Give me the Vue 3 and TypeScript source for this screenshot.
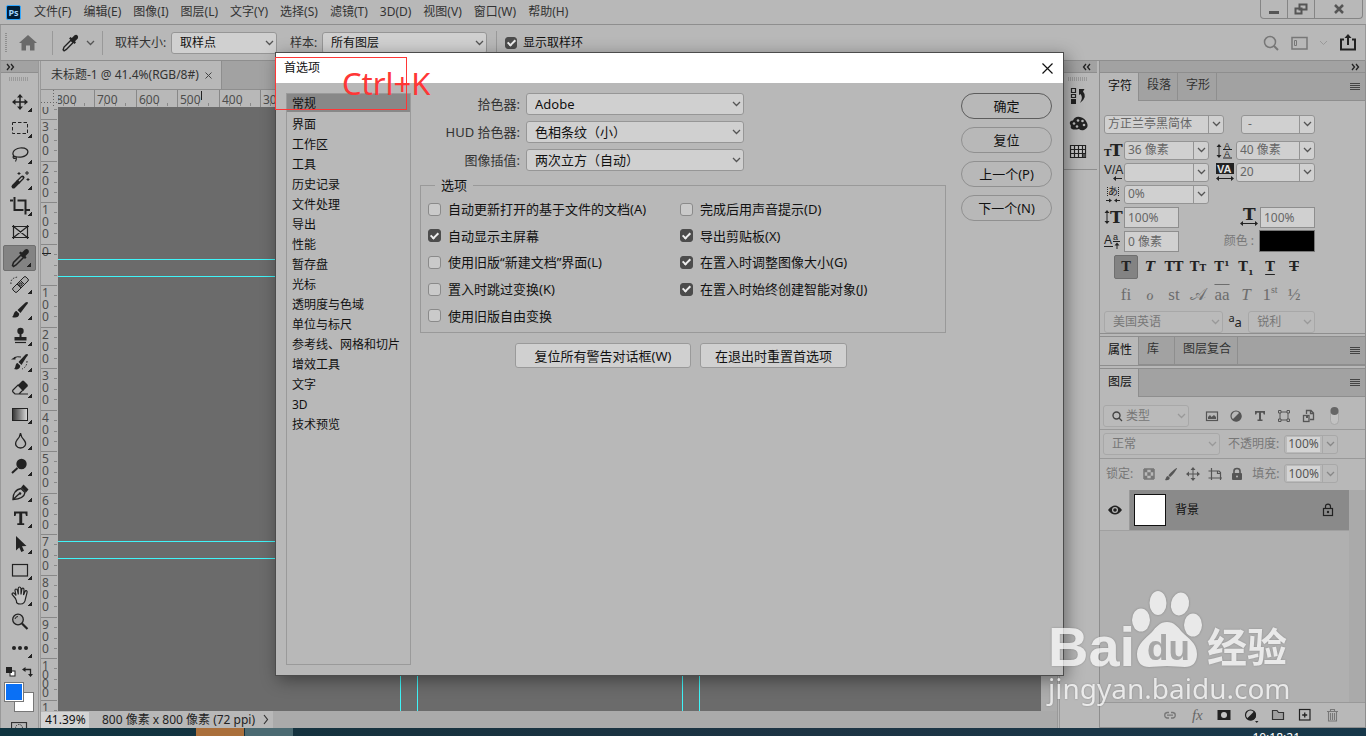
<script setup lang="ts">
import { ref } from 'vue'

interface Tick { pos: number; label: string }

const menus = ['文件(F)', '编辑(E)', '图像(I)', '图层(L)', '文字(Y)', '选择(S)', '滤镜(T)', '3D(D)', '视图(V)', '窗口(W)', '帮助(H)']

const dropper = '<path d="M5.5 20.5l-1-1 1-3 7.5-7.500 2.500 2.500-7.500 7.500z" fill="none" stroke="#222" stroke-width="1.500"/><path d="M11 7l1.500-1.500 1.500 1 3-3q2-1 3.200.3t.3 3.200l-3 3 1 1.500-1.500 1.500z" fill="#222"/>'

const tools: { id: string; title: string; sub: boolean; art: string }[] = [
  { id: 'move', title: '移动', sub: true, art: '<path d="M12 5v14M5 12h14" stroke="#222" stroke-width="1.500"/><path d="M12 4l3 3.500H9zM12 20l3-3.500H9zM4 12l3.500-3v6zM20 12l-3.500-3v6z" fill="#222"/>' },
  { id: 'marquee', title: '选框', sub: true, art: '<rect x="4.500" y="6.500" width="15" height="11" fill="none" stroke="#222" stroke-dasharray="3.500 2"/>' },
  { id: 'lasso', title: '套索', sub: true, art: '<path d="M7 15C3 12 5 7 12 6c6-.5 9 2 7.500 5.500C18 15 11 16 7.500 14.500c-2-1-3 .5-2 1.500s3 0 3-1.200M8 15c1 2 .5 3-.5 4.500" fill="none" stroke="#222" stroke-width="1.200"/>' },
  { id: 'wand', title: '魔棒', sub: true, art: '<path d="M5.500 18.500l5-5" stroke="#222" stroke-width="4" stroke-linecap="round"/><path d="M10 14l4.500-4.500" stroke="#222" stroke-width="4" stroke-linecap="round"/><path d="M11 13l3.500-3.500" stroke="#b8b8b8" stroke-width="1.500"/><path d="M11 4v3M9.500 5.500h3M19 3v4M17 5h4M20 10v3M18.500 11.500h3" stroke="#222"/>' },
  { id: 'crop', title: '裁剪', sub: true, art: '<path d="M6.500 3v13h9M9.500 6.500h8v14M2 6.500h3M18.500 16H22" fill="none" stroke="#222" stroke-width="2"/>' },
  { id: 'frame', title: '图框', sub: false, art: '<path d="M5.500 6.500h14v11h-14zM5.500 6.500l14 11M19.500 6.500l-14 11M4 6.500h2M19 6.500h2M4 17.500h2M19 17.500h2M5.500 5v2M19.500 5v2M5.500 17v2M19.500 17v2" fill="none" stroke="#222" stroke-width="1.200"/>' },
  { id: 'dropper', title: '吸管', sub: true, art: dropper },
  { id: 'heal', title: '修复画笔', sub: true, art: '<path d="M5 16l11-11q1-1 2 0l2 2q1 1 0 2L9 20q-1 1-2 0l-2-2q-1-1 0-2z" fill="#aaa" stroke="#222"/><path d="M9 12l4 4M12.500 8.500l4 4" stroke="#222"/><circle cx="12.500" cy="12.500" r="1.700" fill="#777" stroke="#222"/><path d="M3 12q-1-6 7-7" fill="none" stroke="#222" stroke-dasharray="1.500 1.500"/>' },
  { id: 'brush', title: '画笔', sub: true, art: '<path d="M19.500 4c1 1 0 2-1 3l-6 8-3-3 8-7.500q1-.8 2-.5zM8.500 13l2.800 2.800C11 20 7 20 4 19c2-1 1.500-5.500 4.500-6z" fill="#222"/>' },
  { id: 'stamp', title: '仿制图章', sub: true, art: '<circle cx="12.500" cy="7" r="3.200" fill="#222"/><path d="M11.500 9h2v4h5v3.500h-12V13h5z" fill="#222"/><path d="M7 18.500h11" stroke="#222" stroke-width="1.200"/>' },
  { id: 'history', title: '历史记录画笔', sub: true, art: '<path d="M19.500 4c1 1 0 2-1 3l-5 8-3-3 7-7.500q1-.8 2-.5zM9.500 13l2.800 2.800C12 19.500 8.500 20 6 19c2-1 1-5.500 3.500-6zM3 9.500l4.500-3v3z" fill="#222"/><path d="M6 8q3-2 7-1" fill="none" stroke="#222"/><path d="M19 11q0 6-5 8" fill="none" stroke="#222" stroke-dasharray="1.500 1.500"/>' },
  { id: 'eraser', title: '橡皮擦', sub: true, art: '<path d="M10 9l4-4q1-.8 2 0l3.500 3.500q.8 1 0 2L15 15z" fill="#222"/><path d="M10 9l5 5-4 4H7l-2-2q-1-1 0-2zM10 18h10" fill="none" stroke="#222" stroke-width="1.200"/>' },
  { id: 'gradient', title: '渐变', sub: true, art: '<defs><linearGradient id="gfill"><stop offset="0" stop-color="#333"/><stop offset="1" stop-color="#ddd"/></linearGradient></defs><rect x="4.500" y="6.500" width="15" height="12" fill="url(#gfill)" stroke="#222"/>' },
  { id: 'blur', title: '模糊', sub: true, art: '<path d="M12.500 5q.5 4 3.500 7c4 5-.5 8-3.500 8s-7-3-3.500-8q3-3 3.500-7z" fill="none" stroke="#222" stroke-width="1.300"/>' },
  { id: 'dodge', title: '减淡', sub: true, art: '<circle cx="13.500" cy="10" r="5.200" fill="#222"/><path d="M9.500 14L4 19" stroke="#222" stroke-width="2"/>' },
  { id: 'pen', title: '钢笔', sub: true, art: '<path d="M5 19.500Q5 10 13 8.500l4 4Q16 19 5 19.500zM5 19.500l6-5.500" fill="none" stroke="#222" stroke-width="1.400"/><circle cx="12" cy="13.500" r="1.300" fill="#222"/><path d="M13 7.500l2.500-3 5 5-2.500 3z" fill="#222"/>' },
  { id: 'type', title: '文字', sub: true, art: '<path d="M6 5.500h13.500V10H18l-.7-2.500h-3.100v9.800h2v1.700H9.300v-1.700h2V7.500H8.200L7.500 10H6z" fill="#222"/>' },
  { id: 'select', title: '路径选择', sub: true, art: '<path d="M8 4v14.500l3.300-3 2 4.500 2.700-1.200-2-4.500 4.500-.3z" fill="#222"/>' },
  { id: 'rect', title: '矩形', sub: true, art: '<rect x="4.500" y="6.500" width="15" height="11.500" fill="none" stroke="#222" stroke-width="1.200"/>' },
  { id: 'hand', title: '抓手', sub: true, art: '<path d="M7.500 14.500l-3-3.500q-1-1.500.3-2T8 11.500L7 6.500Q7 5 8 5t1.500 1.500l.8 4-.1-6Q10.500 3 11.500 3T13 4.500v6l.8-5Q14 4 15 4.200T16 6l-.5 5 1.500-3.500q.8-1.300 1.600-.8t.4 2l-1.500 5.800Q17 20 12.500 20T8.500 17z" fill="#c4c4c4" stroke="#222" stroke-width="1.200"/>' },
  { id: 'zoom', title: '缩放', sub: false, art: '<circle cx="10" cy="9.500" r="5.300" fill="#aaa" stroke="#222" stroke-width="1.300"/><path d="M14 13.500l5.500 5.500" stroke="#222" stroke-width="2.200"/><path d="M7 9q.5-2.500 3-2.500" fill="none" stroke="#222"/>' },
  { id: 'more', title: '更多', sub: true, art: '<circle cx="6" cy="12" r="2" fill="#222"/><circle cx="12" cy="12" r="2" fill="#222"/><circle cx="18" cy="12" r="2" fill="#222"/>' },
]

const majorStep = 41.45
const hTicks: Tick[] = Array.from({ length: 6 }, (_, i) => ({ pos: Math.round(-5 + i * majorStep), label: String(Math.abs(800 - i * 100)) }))
const vTicks: Tick[] = Array.from({ length: 16 }, (_, i) => ({ pos: Math.round(-29 + i * majorStep), label: String(Math.abs(400 - i * 100)) }))
const minor = [10, 21, 31]
const digitStep = (label: string): number => (label.length > 3 ? 9 : 12)

const sections = ['常规', '界面', '工作区', '工具', '历史记录', '文件处理', '导出', '性能', '暂存盘', '光标', '透明度与色域', '单位与标尺', '参考线、网格和切片', '增效工具', '文字', '3D', '技术预览']
const current = ref('常规')

const fields = [
  { id: 'picker', label: '拾色器:', value: 'Adobe' },
  { id: 'hud', label: 'HUD 拾色器:', value: '色相条纹（小）' },
  { id: 'interp', label: '图像插值:', value: '两次立方（自动）' },
]

const leftChecks = ref([
  { label: '自动更新打开的基于文件的文档(A)', on: false },
  { label: '自动显示主屏幕', on: true },
  { label: '使用旧版“新建文档”界面(L)', on: false },
  { label: '置入时跳过变换(K)', on: false },
  { label: '使用旧版自由变换', on: false },
])
const rightChecks = ref([
  { label: '完成后用声音提示(D)', on: false },
  { label: '导出剪贴板(X)', on: true },
  { label: '在置入时调整图像大小(G)', on: true },
  { label: '在置入时始终创建智能对象(J)', on: true },
])
const actions = ['确定', '复位', '上一个(P)', '下一个(N)']
const showRing = ref(true)

const dockIcons = [
  { id: '历史记录', art: '<path d="M2.500 2.500h4v4h-4zM2.500 8.500h4v3h-4z" fill="none" stroke="#222" stroke-width="1.200"/><rect x="2" y="13" width="5" height="5" fill="#222"/><path d="M10 3h5.500l-1.500 2.500q5 5.500-3 11.500 3.500-5.500.5-9L10 9z" fill="#222"/>' },
  { id: '颜色', art: '<path d="M1 10q-1-3 3-3.500Q6 2 11 3t7 6-3 7q-3 1-5-1-5 1-7 0-2-1-1-3z" fill="#222"/><g fill="#b8b8b8"><circle cx="5" cy="9.500" r="1.300"/><circle cx="9" cy="6.500" r="1.300"/><circle cx="13.500" cy="7" r="1.300"/><circle cx="15" cy="11" r="1.300"/><circle cx="8" cy="12.500" r="1.300"/></g>' },
  { id: '色板', art: '<path d="M1.500 3.500h15v12h-15zM1.500 7.500h15M1.500 11.500h15M5.500 3.500v12M9.500 3.500v12M13.500 3.500v12" fill="#c8c8c8" stroke="#222" stroke-width="1.200"/><path d="M14 12h2.500v3H14z" fill="#555"/>' },
]

const styles = [
  { t: 'T', cls: 'bold', name: '仿粗体' }, { t: 'T', cls: 'ital', name: '仿斜体' }, { t: 'TT', cls: '', name: '全部大写' },
  { t: 'T', small: 'T', cls: '', name: '小型大写' }, { t: 'T', sup: '1', cls: '', name: '上标' }, { t: 'T', sub: '1', cls: '', name: '下标' },
  { t: 'T', cls: 'under', name: '下划线' }, { t: 'T', cls: 'strike', name: '删除线' },
]
const ligs = [
  { t: 'fi', cls: '' }, { t: 'ℴ', cls: 'ital' }, { t: 'st', cls: '' }, { t: '𝒜', cls: '' },
  { t: 'aa', cls: 'over' }, { t: 'T', cls: 'ital' }, { t: '1', sup: 'st', cls: '' }, { t: '½', cls: '' },
]

const filterIcons = [
  '<rect x="2.500" y="4" width="11" height="8.500" fill="none" stroke="#555" stroke-width="1.200"/><path d="M4 11V9l2-2 1.500 2L10 7l2 2v2z" fill="#555"/>',
  '<circle cx="8" cy="8" r="5" fill="none" stroke="#555" stroke-width="1.200"/><path d="M11.500 4.500A5 5 0 1 1 4.500 11.500z" fill="#555"/>',
  '<path d="M3 3h10v3.500h-1.200L11 4.800H9v6.700h1.500V13h-5v-1.500H7V4.800H5L4.200 6.500H3z" fill="#555"/>',
  '<path d="M4 4h8v8H4z" fill="none" stroke="#555"/><path d="M2.500 2.500h2.500v2.500H2.500zM11 2.500h2.500v2.500H11zM2.500 11h2.500v2.500H2.500zM11 11h2.500v2.500H11z" fill="#b8b8b8" stroke="#555"/>',
  '<path d="M6.500 6V2.500H11l2.500 2.500v6.500H10M10.500 3v2.500H13" fill="none" stroke="#555" stroke-width="1.300"/><rect x="3.500" y="7.500" width="5.500" height="6" fill="none" stroke="#555" stroke-width="1.300"/><path d="M6 7h2v3H6z" fill="#555"/>',
]
const lockIcons = [
  '<path d="M3 3h10v10H3z" fill="none" stroke="#555"/><path d="M3 3h3.300v3.300H3zM9.700 3H13v3.300H9.700zM6.300 6.300h3.400v3.400H6.300zM3 9.700h3.300V13H3zM9.700 9.700H13V13H9.700z" fill="#777"/>',
  '<path d="M14 2c.5 1-6 9-7 9L5.500 9.500C6 8 13 1.500 14 2zM5 10l1.800 1.800C6.500 14.500 4 14.500 2 14c1-1 1-4 3-4z" fill="#555"/>',
  '<path d="M8 3v10M3 8h10" stroke="#555"/><path d="M8 1l2.500 3h-5zM8 15l2.500-3h-5zM1 8l3-2.500v5zM15 8l-3-2.500v5z" fill="#555"/>',
  '<path d="M4.500 2v12M1.500 5H12l1.500 1.500V14M1.500 12H15M10.500 5v2.500h3" fill="none" stroke="#555" stroke-width="1.200"/>',
  '<rect x="3" y="7" width="10" height="7" rx="1" fill="#555"/><path d="M5 7V5q0-2.500 3-2.500T11 5v2" fill="none" stroke="#555" stroke-width="1.600"/><circle cx="8" cy="10.500" r="1" fill="#b8b8b8"/>',
]
const footIcons = [
  { id: '链接', art: '<path d="M7 5.500H5a2.800 2.800 0 0 0 0 5.500h2M9 5.500h2a2.800 2.800 0 0 1 0 5.500H9M5 8.200h6" fill="none" stroke="#777" stroke-width="1.300"/>' },
  { id: '样式', art: '' },
  { id: '蒙版', art: '<rect x="1.500" y="3" width="13" height="10" fill="#222"/><circle cx="8" cy="8" r="3" fill="#c4c4c4"/>' },
  { id: '调整', art: '<circle cx="7.500" cy="8" r="5" fill="none" stroke="#222" stroke-width="1.200"/><path d="M11 4.500A5 5 0 1 1 4 11.500z" fill="#222"/><path d="M12 14h3.500l-1.700 2z" fill="#222"/>' },
  { id: '新建组', art: '<path d="M2.500 12.500v-9H7l1.500 2h5v7z" fill="#a0a0a0" stroke="#333" stroke-width="1.200"/>' },
  { id: '新建图层', art: '<rect x="2.500" y="2.500" width="10.500" height="10.500" fill="none" stroke="#222" stroke-width="1.200"/><path d="M7.750 5.500v5M5.200 8h5" stroke="#222" stroke-width="1.300"/>' },
  { id: '删除', art: '<path d="M3 4.500h11M6.500 4V2.500h4V4M4.500 5v9h8V5M6.500 6v7M8.500 6v7M10.500 6v7" fill="none" stroke="#777" stroke-width="1.100"/>' },
]
</script>

<template>
  <div class="screen">
    <header class="menubar">
      <span class="ps">Ps</span>
      <nav class="menus"><a v-for="m in menus" :key="m" href="#">{{ m }}</a></nav>
      <div class="winctl">
        <button aria-label="最小化"><svg width="12" height="12"><path d="M1 9.500h10" stroke="#555" stroke-width="3" /></svg></button>
        <button aria-label="还原"><svg width="14" height="12"><path d="M5.500 1.500h7v5h-7zM1.500 5.500h6v5h-6z" fill="none" stroke="#555" stroke-width="2" /></svg></button>
        <button class="wide" aria-label="关闭"><svg width="12" height="12"><path d="M2 2l8 8M10 2l-8 8" stroke="#555" stroke-width="2.500" /></svg></button>
      </div>
    </header>

    <div class="options">
      <i class="vgrip"></i>
      <button class="home" aria-label="主页"><svg width="18" height="16"><path d="M9 0l9 8h-2.500v7.500H11v-5H7v5H2.500V8H0z" fill="#6a6a6a" /></svg></button>
      <i class="sep"></i>
      <svg class="opt-drop" width="22" height="22" viewBox="0 0 24 24" v-html="dropper"></svg>
      <svg class="chev" width="9" height="6"><path d="M1 1l3.500 3.500L8 1" /></svg>
      <i class="sep sep2"></i>
      <label class="lab" for="size">取样大小:</label>
      <span class="sel size"><select id="size"><option>取样点</option></select><svg width="9" height="6"><path d="M1 1l3.500 3.500L8 1" /></svg></span>
      <label class="lab lab2" for="sample">样本:</label>
      <span class="sel sample"><select id="sample"><option>所有图层</option></select><svg width="9" height="6"><path d="M1 1l3.500 3.500L8 1" /></svg></span>
      <i class="sep sep3"></i>
      <label class="ring"><input v-model="showRing" type="checkbox" class="cb small">显示取样环</label>
      <div class="opt-right">
        <svg width="16" height="16"><circle cx="7" cy="7" r="5.500" fill="none" stroke="#777" stroke-width="1.500" /><path d="M11 11l4 4" stroke="#777" stroke-width="2" /></svg>
        <svg width="17" height="14"><path d="M1 1.500h15v11.500H1z" fill="none" stroke="#777" stroke-width="1.500" /><path d="M3.500 4.500h2v5h-2z" fill="none" stroke="#777" /></svg>
        <svg class="pale" width="9" height="6"><path d="M1 1l3.500 3.500L8 1" /></svg>
        <svg width="18" height="17"><path d="M5 5.500H2V15.500h14V5.500h-3M9 11V3" fill="none" stroke="#222" stroke-width="2" /><path d="M9 0l3.500 4h-7z" fill="#222" /></svg>
      </div>
    </div>

    <main class="work">
      <aside class="tools">
        <div class="strip">
          <svg width="9" height="8"><path d="M1 1l2.500 3L1 7M5 1l2.500 3L5 7" class="dbl" /></svg>
        </div>
        <i class="hgrip"></i>
        <div class="toollist">
          <button v-for="t in tools" :key="t.id" :class="['tool', { active: t.id === 'dropper', sub: t.sub }]" :aria-label="t.title">
            <svg width="24" height="24" viewBox="0 0 24 24" v-html="t.art"></svg>
          </button>
        </div>
        <div class="swaps">
          <svg width="12" height="12"><rect x="5" y="5" width="5" height="5" fill="#fff" stroke="#222" /><rect x="1" y="1" width="6" height="6" fill="#222" /></svg>
          <svg width="12" height="12"><path d="M3 3.500h5.500V9" fill="none" stroke="#222" stroke-width="1.300" /><path d="M0 3.500L3.500 1v5zM8.500 11L6 8h5z" fill="#222" /></svg>
        </div>
        <div class="colors"><i class="bgc"></i><i class="fgc"></i></div>
        <svg class="mask" width="18" height="13"><rect x=".5" y=".5" width="15" height="12" fill="none" stroke="#333" stroke-width="1.200" /><circle cx="8" cy="6" r="3.500" fill="none" stroke="#333" stroke-dasharray="1.500 1" /></svg>
      </aside>

      <section class="doc">
        <div class="doctabs"><div class="doctab"><span>未标题-1 @ 41.4%(RGB/8#)</span><button aria-label="关闭文档"><svg width="7" height="7"><path d="M.5.5l6 6M6.500.5l-6 6" stroke="#444" /></svg></button></div></div>
        <div class="docgrid">
          <svg class="corner" width="17" height="17"><path d="M0 12.500h17M12.500 0v17" stroke="#666" stroke-dasharray="1 2" /></svg>
          <svg class="hruler" width="100%" height="17">
            <g v-for="t in hTicks" :key="t.pos">
              <line :x1="t.pos + 0.5" :x2="t.pos + 0.5" y1="0" y2="17" />
              <line v-for="m in minor" :key="m" :x1="t.pos + m + 0.5" :x2="t.pos + m + 0.5" y1="13" y2="16" />
              <text :x="t.pos + 3" y="14">{{ t.label }}</text>
            </g>
            <line class="cursor" x1="143.500" x2="143.500" y1="1" y2="10" />
          </svg>
          <svg class="vruler" width="17" height="100%">
            <g v-for="t in vTicks" :key="t.pos">
              <line x1="0" x2="16" :y1="t.pos + 0.5" :y2="t.pos + 0.5" />
              <line v-for="m in minor" :key="m" x1="13" x2="16" :y1="t.pos + m + 0.5" :y2="t.pos + m + 0.5" />
              <text v-for="(d, i) in t.label.split('')" :key="i" x="1" :y="t.pos + 12 + i * digitStep(t.label)">{{ d }}</text>
            </g>
            <line class="cursor" x1="1" x2="10" y1="146.500" y2="146.500" />
          </svg>
          <svg class="canvas" width="100%" height="100%">
            <line v-for="y in [152, 169, 434, 451]" :key="y" x1="0" x2="100%" :y1="y + 0.5" :y2="y + 0.5" />
            <line v-for="x in [342, 359, 624, 641]" :key="x" y1="0" y2="100%" :x1="x + 0.5" :x2="x + 0.5" />
          </svg>
          <div class="vscroll"></div>
        </div>
        <footer class="status">
          <input class="zoomv" aria-label="缩放比例" value="41.39%">
          <span class="docinfo">800 像素 x 800 像素 (72 ppi)</span>
          <svg width="6" height="11"><path d="M1 1l3.500 4.500L1 10" fill="none" stroke="#333" stroke-width="1.200" /></svg>
        </footer>
      </section>

      <aside class="dock">
        <div class="strip end"><svg width="9" height="8"><path d="M4 1L1.500 4 4 7M8 1L5.500 4 8 7" class="dbl" /></svg></div>
        <div class="dockbody">
          <i class="hgrip"></i>
          <button v-for="d in dockIcons" :key="d.id" :aria-label="d.id"><svg width="19" height="19" v-html="d.art"></svg></button>
        </div>
      </aside>

      <aside class="panels">
        <div class="strip end"><svg width="9" height="8"><path d="M1 1l2.500 3L1 7M5 1l2.500 3L5 7" class="dbl" /></svg></div>
        <section class="group">
          <div class="tabs"><button class="on">字符</button><button>段落</button><button>字形</button><i class="burger"></i></div>
          <div class="char">
            <div class="crow">
              <span class="combo font"><input aria-label="字体" value="方正兰亭黑简体"><button aria-label="展开"><svg width="9" height="6"><path d="M1 1l3.500 3.500L8 1" /></svg></button></span>
              <span class="combo face"><input aria-label="字体样式" value="-"><button aria-label="展开"><svg width="9" height="6"><path d="M1 1l3.500 3.500L8 1" /></svg></button></span>
            </div>
            <div class="crow">
              <svg class="ci" width="18" height="18"><text x="0" y="15" font-size="10">T</text><text x="6" y="15" font-size="17">T</text></svg>
              <span class="combo num"><input aria-label="字号" value="36 像素"><button aria-label="展开"><svg width="9" height="6"><path d="M1 1l3.500 3.500L8 1" /></svg></button></span>
              <svg class="ci" width="18" height="18"><path d="M3 5v9M7 8.500h9M7 17h9" class="ln" /><path d="M3 3l2.500 3h-5zM3 17l2.500-3h-5z" /><text class="sans" x="8" y="8" font-size="9">A</text><text class="sans" x="8" y="16" font-size="9">A</text></svg>
              <span class="combo lead"><input aria-label="行距" value="40 像素"><button aria-label="展开"><svg width="9" height="6"><path d="M1 1l3.500 3.500L8 1" /></svg></button></span>
            </div>
            <div class="crow">
              <svg class="ci" width="18" height="18"><text class="sans" x="0" y="11" font-size="12">V/A</text><path d="M10 15.500h8" class="ln" /><path d="M9 15.500l3-2.500v5z" /></svg>
              <span class="combo num"><input aria-label="字距微调" value=""><button aria-label="展开"><svg width="9" height="6"><path d="M1 1l3.500 3.500L8 1" /></svg></button></span>
              <svg class="ci" width="18" height="18"><rect width="18" height="11" /><text class="sans inv" x="1" y="10" font-size="11">VA</text><path d="M2 15.500h14" class="ln" /><path d="M0 15.500l3-2.500v5zM18 15.500l-3-2.500v5z" /></svg>
              <span class="combo lead"><input aria-label="字距" value="20"><button aria-label="展开"><svg width="9" height="6"><path d="M1 1l3.500 3.500L8 1" /></svg></button></span>
            </div>
            <div class="crow">
              <svg class="ci" width="18" height="18"><path d="M3.500 2v10M14.500 2v10" stroke="#222" stroke-dasharray="1 1" /><text class="jp" x="4" y="10" font-size="10">あ</text><path d="M2 15.500h5M11 15.500h5" class="ln" /><path d="M8 15.500l-3-2v4zM10 15.500l3-2v4z" /></svg>
              <span class="combo num"><input aria-label="比例间距" value="0%"><button aria-label="展开"><svg width="9" height="6"><path d="M1 1l3.500 3.500L8 1" /></svg></button></span>
            </div>
            <div class="crow tall">
              <svg class="ci" width="18" height="18"><path d="M3 5v8" class="ln" /><path d="M3 2l2.500 3h-5zM3 16l2.500-3h-5z" /><text x="6" y="15" font-size="17">T</text></svg>
              <input class="plain" aria-label="垂直缩放" value="100%">
              <i class="grow"></i>
              <svg class="ci" width="18" height="18"><text x="3" y="12" font-size="17">T</text><path d="M2 15.500h14" class="ln" /><path d="M0 15.500l3-2.500v5zM18 15.500l-3-2.500v5z" /></svg>
              <input class="plain" aria-label="水平缩放" value="100%">
            </div>
            <div class="crow tall">
              <svg class="ci" width="18" height="18"><text class="sans" x="0" y="12" font-size="12">A</text><text class="sans" x="9" y="8" font-size="9">a</text><path d="M0 14.500h9M9 9.500h7M13 12v5" class="ln" /><path d="M13 10.500l2.500 3h-5z" /></svg>
              <input class="plain" aria-label="基线偏移" value="0 像素">
              <i class="grow"></i>
              <span class="clab">颜色 :</span>
              <button class="black" aria-label="颜色"></button>
            </div>
            <div class="tstyles">
              <button v-for="(s, i) in styles" :key="i" :class="[s.cls, { pressed: i === 0 }]" :aria-label="s.name">{{ s.t }}<small v-if="s.small">{{ s.small }}</small><sup v-if="s.sup">{{ s.sup }}</sup><sub v-if="s.sub">{{ s.sub }}</sub></button>
            </div>
            <div class="tstyles ligs">
              <button v-for="(s, i) in ligs" :key="i" :class="s.cls">{{ s.t }}<sup v-if="s.sup">{{ s.sup }}</sup></button>
            </div>
            <div class="crow langrow">
              <span class="sel dis lang"><select aria-label="语言" disabled><option>美国英语</option></select><svg width="9" height="6"><path d="M1 1l3.500 3.500L8 1" /></svg></span>
              <span class="aa"><sup>a</sup>a</span>
              <span class="sel dis sharp"><select aria-label="消除锯齿" disabled><option>锐利</option></select><svg width="9" height="6"><path d="M1 1l3.500 3.500L8 1" /></svg></span>
            </div>
          </div>
        </section>
        <section class="group">
          <div class="tabs"><button class="on">属性</button><button class="lib">库</button><button>图层复合</button><i class="burger"></i></div>
        </section>
        <section class="group layers">
          <div class="tabs"><button class="on">图层</button><i class="burger"></i></div>
          <div class="lrow filt">
            <span class="sel dis kind"><svg class="mag" width="11" height="11"><circle cx="4.500" cy="4.500" r="3.500" fill="none" stroke="#444" stroke-width="1.400" /><path d="M7 7l3 3" stroke="#444" stroke-width="2" /></svg><select aria-label="滤镜类型" disabled><option>类型</option></select><svg width="9" height="6"><path d="M1 1l3.500 3.500L8 1" /></svg></span>
            <span class="ficons"><svg v-for="(f, i) in filterIcons" :key="i" width="16" height="16" v-html="f"></svg></span>
            <svg class="toggle" width="11" height="20"><rect x="1.500" y="1.500" width="8" height="17" rx="4" fill="#c2c2c2" stroke="#a8a8a8" /><circle cx="5.500" cy="5" r="4" fill="#666" /></svg>
          </div>
          <div class="lrow">
            <span class="sel dis blend"><select aria-label="混合模式" disabled><option>正常</option></select><svg width="9" height="6"><path d="M1 1l3.500 3.500L8 1" /></svg></span>
            <label class="clab olab" for="op">不透明度:</label>
            <span class="combo pct"><input id="op" value="100%"><button aria-label="展开"><svg width="9" height="6"><path d="M1 1l3.500 3.500L8 1" /></svg></button></span>
          </div>
          <div class="lrow nob">
            <span class="clab llab">锁定:</span>
            <span class="licons"><svg v-for="(f, i) in lockIcons" :key="i" width="16" height="16" v-html="f"></svg></span>
            <label class="clab" for="fill">填充:</label>
            <span class="combo pct"><input id="fill" value="100%"><button aria-label="展开"><svg width="9" height="6"><path d="M1 1l3.500 3.500L8 1" /></svg></button></span>
          </div>
          <div class="llist">
            <div class="lmain">
              <div class="layer">
                <span class="eye"><svg width="14" height="10"><path d="M0 5q7-9 14 0-7 9-14 0z" fill="#222" /><circle cx="7" cy="5" r="3" fill="#b8b8b8" /><circle cx="7" cy="5" r="1.800" fill="#222" /></svg></span>
                <div class="lsel"><i class="thumb"></i><span>背景</span><svg width="12" height="14"><rect x="1.500" y="5.500" width="9" height="7" fill="none" stroke="#222" stroke-width="1.200" /><path d="M3.500 5V3.500Q3.500 1.200 6 1.200T8.500 3.500V5" fill="none" stroke="#222" stroke-width="1.200" /><circle cx="6" cy="9" r="1.200" fill="#222" /></svg></div>
              </div>
            </div>
            <div class="lscroll"></div>
          </div>
          <div class="lfoot">
            <button v-for="f in footIcons" :key="f.id" :aria-label="f.id"><span v-if="!f.art" class="fx">fx</span><svg v-else width="16" height="16" v-html="f.art"></svg></button>
          </div>
        </section>
      </aside>
    </main>

    <div class="desk"><i class="orange"></i><i class="teal"></i><span class="clock">10:18:21</span></div>

    <div class="dialog" role="dialog" aria-label="首选项">
      <div class="dtitle"><span>首选项</span><button aria-label="关闭对话框"><svg width="11" height="11"><path d="M.5.5l10 10M10.500.5l-10 10" stroke="#111" stroke-width="1.200" /></svg></button></div>
      <div class="dbody">
        <ul class="dlist"><li v-for="s in sections" :key="s"><button :class="{ current: s === current }" @click="current = s">{{ s }}</button></li></ul>
        <div class="dform">
          <div class="dfields">
            <template v-for="f in fields" :key="f.id">
              <label :for="f.id">{{ f.label }}</label>
              <span class="sel"><select :id="f.id"><option>{{ f.value }}</option></select><svg width="9" height="6"><path d="M1 1l3.500 3.500L8 1" /></svg></span>
            </template>
          </div>
          <fieldset>
            <legend>选项</legend>
            <div class="checks">
              <div><label v-for="c in leftChecks" :key="c.label"><input v-model="c.on" type="checkbox" class="cb">{{ c.label }}</label></div>
              <div><label v-for="c in rightChecks" :key="c.label"><input v-model="c.on" type="checkbox" class="cb">{{ c.label }}</label></div>
            </div>
          </fieldset>
          <div class="resets"><button class="r1">复位所有警告对话框(W)</button><button>在退出时重置首选项</button></div>
        </div>
        <div class="dactions"><button v-for="a in actions" :key="a">{{ a }}</button></div>
      </div>
    </div>

    <div class="redbox"></div>
    <div class="rednote">Ctrl+K</div>

    <div class="wm">
      <div class="wmtop">
        <span class="bai">Bai</span>
        <svg width="72" height="80" viewBox="0 0 72 80">
          <g fill="#fff"><ellipse cx="10" cy="30" rx="9" ry="11.500" /><ellipse cx="27" cy="13" rx="8.500" ry="12" /><ellipse cx="49" cy="14" rx="9" ry="11.500" transform="rotate(12 49 14)" /><ellipse cx="62" cy="35" rx="9" ry="11.500" />
            <path d="M36 32c7 0 11 5 15 10 6 6 15 11 15 22 0 9-5 13-12 13-6 0-12-1-18-1s-12 1-18 1C11 77 6 73 6 64c0-10 9-16 15-22 4-5 8-10 15-10z" /></g>
          <text x="16" y="70">du</text>
        </svg>
        <span class="jy">经验</span>
      </div>
      <div class="url">jingyan.baidu.com</div>
    </div>
  </div>
</template>

<style>
html, body { margin: 0; overflow: hidden; }
</style>

<style scoped>
.screen { position: relative; display: flex; flex-direction: column; height: 100vh; overflow: hidden; background: #b8b8b8; color: #333; font: 12px/16px "Noto Sans", "Noto Sans CJK SC", sans-serif; }
.screen * { box-sizing: border-box; }
button, input, select { font: inherit; color: inherit; margin: 0; padding: 0; border: 0; background: none; border-radius: 0; outline: 0; min-width: 0; }
select { appearance: none; opacity: 1; }
a { color: inherit; text-decoration: none; }
svg { display: block; flex: none; }
i { display: block; flex: none; }
.menubar { display: flex; align-items: center; height: 25px; border-bottom: 1px solid #8e8e8e; flex: none; }
.ps { width: 15px; height: 15px; margin-left: 6px; border: 1px solid #31a8ff; border-radius: 2px; background: #001e36; color: #9fd4ff; font-size: 9px; line-height: 13px; font-weight: 700; text-align: center; }
.menus { display: flex; gap: 12px; margin-left: 13px; flex: 1; }
.winctl { display: flex; align-self: flex-start; height: 19px; border: 1px solid #858585; border-top: 0; border-radius: 0 0 4px 4px; margin-right: 3px; }
.winctl button { width: 27px; display: grid; place-items: center; border-right: 1px solid #858585; }
.winctl .wide { width: 47px; border: 0; }
.options { display: flex; align-items: center; height: 36px; border-bottom: 1px solid #8e8e8e; border-left: 1px solid #999; border-right: 1px solid #999; flex: none; }
.vgrip { width: 2px; height: 19px; margin-left: 4px; background: repeating-linear-gradient(#8e8e8e 0 1px, transparent 1px 2px); }
.home { margin-left: 12px; }
.sep { width: 1px; height: 24px; margin-left: 15px; background: #999; }
.opt-drop { margin-left: 6px; }
.chev { margin-left: 5px; }
.chev path, .sel path, .combo path { fill: none; stroke: #555; stroke-width: 1.3; }
.sep2 { margin-left: 7px; }
.lab { margin-left: 12px; width: 56px; }
.lab2 { width: 32px; margin-left: 13px; }
.sel { display: grid; grid-template-columns: 1fr; align-items: center; height: 22px; border: 1px solid #969696; border-radius: 3px; background: #d0d0d0; color: #111; }
.sel select { grid-area: 1 / 1; width: 100%; height: 100%; padding-left: 8px; color: inherit; }
.sel > svg { grid-area: 1 / 1; justify-self: end; margin-right: 2px; pointer-events: none; }
.size { width: 106px; }
.sample { width: 165px; }
.sep3 { margin-left: 9px; }
.ring { display: flex; align-items: center; gap: 6px; margin-left: 8px; color: #111; }
.opt-right { display: flex; align-items: center; gap: 12px; margin-left: auto; margin-right: 8px; }
.pale { margin: 0 -1px; }
.pale path { fill: none; stroke: #999; }
.cb { appearance: none; display: grid; place-items: center; width: 13px; height: 13px; flex: none; border: 1px solid #8a8a8a; border-radius: 3px; background: #cacaca; }
.cb.small { width: 12px; height: 12px; }
.cb:checked { background: #4c4c4c; border-color: #4c4c4c; }
.cb:checked::after { content: ""; width: 3px; height: 6px; margin-top: -2px; border: solid #eee; border-width: 0 2px 2px 0; transform: rotate(45deg); }
.work { display: flex; flex: 1; min-height: 0; }
.strip { display: flex; align-items: center; height: 12px; padding: 0 5px; background: #a2a2a2; border-bottom: 1px solid #8e8e8e; flex: none; }
.end { justify-content: flex-end; }
.dbl { fill: none; stroke: #222; stroke-width: 1.3; }
.tools { width: 39px; border-left: 1px solid #999; border-right: 1px solid #999; flex: none; overflow: hidden; }
.hgrip { width: 20px; height: 4px; margin: 4px auto 0 8px; background: repeating-linear-gradient(90deg, #9a9a9a 0 1px, transparent 1px 2px); }
.toollist { display: flex; flex-direction: column; padding: 8px 2px 0; }
.tool { display: grid; grid-template-columns: 1fr; align-items: center; width: 33px; height: 26px; border-radius: 2px; padding-left: 5px; }
.tool svg { grid-area: 1 / 1; }
.tool.sub::after { content: ""; grid-area: 1 / 1; place-self: end; width: 4px; height: 4px; margin: 0 4px 3px 0; background: linear-gradient(135deg, transparent 50%, #222 50%); }
.tool.active { background: #838383; border: 1px solid #6f6f6f; padding-left: 4px; }
.swaps { display: flex; gap: 5px; padding: 5px 0 0 4px; }
.colors { display: grid; width: 30px; height: 30px; margin: 4px 0 0 3px; }
.colors i { grid-area: 1 / 1; width: 20px; height: 20px; border: 1px solid #777; }
.bgc { place-self: end; background: #fff; }
.fgc { background: #0a70f5; box-shadow: inset 0 0 0 1px #fff; }
.mask { margin: 10px 0 0 10px; }
.doc { display: flex; flex-direction: column; flex: 1; min-width: 0; margin-left: 1px; border-left: 1px solid #999; border-right: 1px solid #999; }
.doctabs { display: flex; height: 29px; background: #a2a2a2; border-bottom: 1px solid #8e8e8e; flex: none; }
.doctab { display: flex; align-items: center; gap: 6px; padding: 0 9px 0 10px; background: #b8b8b8; border-right: 1px solid #8e8e8e; }
.docgrid { display: grid; grid-template: 17px 1fr / 17px 1fr 16px; flex: 1; min-height: 0; background: #b8b8b8; }
.hruler, .vruler { overflow: hidden; }
.hruler line, .vruler line { stroke: #888; }
.hruler text, .vruler text { fill: #4d4d4d; font-size: 12px; }
.hruler line.cursor, .vruler line.cursor { stroke: #222; }
.hruler { grid-column: 2 / 4; }
.canvas { background: #6b6b6b; min-height: 0; }
.canvas line { stroke: #40f4f8; }
.vscroll { background: #adadad; }
.status { display: flex; align-items: center; height: 17px; background: linear-gradient(90deg, #b8b8b8 232px, #aaa 232px); flex: none; }
.zoomv { width: 48px; height: 16px; background: #d4d4d4; color: #111; padding-left: 4px; }
.docinfo { margin: 0 8px 0 13px; color: #222; }
.dock { display: flex; flex-direction: column; width: 38px; margin-left: 1px; border-left: 1px solid #999; flex: none; }
.dock .strip { padding-right: 6px; }
.dockbody { border-bottom: 1px solid #8e8e8e; height: 97px; }
.dockbody button { display: block; height: 28px; margin-left: 9px; }
.panels { display: flex; flex-direction: column; width: 267px; margin-left: 2px; border-right: 1px solid #8e8e8e; border-left: 1px solid #8e8e8e; flex: none; }
.tabs { display: flex; height: 28px; background: #a2a2a2; flex: none; border-bottom: 1px solid #8e8e8e; }
.tabs button { height: 27px; padding: 0 6px 3px 8px; border-right: 1px solid #8e8e8e; color: #333; }
.tabs .on { background: #b8b8b8; height: 28px; color: #111; }
.tabs .lib { padding-right: 15px; }
.burger { width: 10px; height: 7px; margin: 10px 5px 0 auto; background: repeating-linear-gradient(#444 0 1px, transparent 1px 2px); }
.group { margin-bottom: 2px; border-bottom: 1px solid #8e8e8e; }
.group + .group { border-top: 1px solid #8e8e8e; }
.char { display: flex; flex-direction: column; gap: 4px; padding: 14px 50px 0 4px; }
.crow { display: flex; align-items: center; height: 18px; gap: 2px; color: #666; }
.crow:first-child { margin-bottom: 4px; }
.crow.tall { height: 20px; }
.combo { display: flex; height: 19px; border: 1px solid #949494; border-radius: 3px; background: #d0d0d0; color: #666; flex: none; }
.combo input { flex: 1; padding-left: 3px; width: 0; }
.combo button { width: 15px; border-left: 1px solid #949494; display: grid; place-items: center; }
.font { width: 120px; }
.face { width: 74px; margin-left: auto; }
.face input { padding-left: 6px; }
.num { width: 85px; margin-right: 5px; }
.lead { width: 79px; }
.ci { fill: #222; overflow: visible; }
.ci text { font-family: "DejaVu Serif", serif; font-weight: 700; fill: #222; }
.ci text.sans { font-family: "Liberation Sans", sans-serif; font-weight: 400; }
.ci text.inv { fill: #e4e4e4; font-weight: 700; }
.ci text.jp { font-family: "Noto Sans CJK JP", sans-serif; font-weight: 400; }
.ci .ln { fill: none; stroke: #222; }
.plain { width: 55px; height: 21px; border: 1px solid #8e8e8e; background: #d0d0d0; padding-left: 3px; }
.grow { flex: 1; }
.clab { color: #777; }
.black { width: 56px; height: 22px; margin-left: 3px; background: #000; border: 1px solid #777; }
.tstyles { display: flex; margin: 0 0 0 10px; height: 24px; font-family: "DejaVu Serif", serif; font-weight: 700; color: #222; font-size: 13px; }
.tstyles button { width: 24px; text-align: center; white-space: nowrap; border-radius: 2px; }
.tstyles small { font-size: 9px; }
.tstyles sup, .tstyles sub { font-size: 8px; line-height: 0; }
.tstyles .pressed { background: #838383; border: 1px solid #6f6f6f; }
.ital { font-style: italic; }
.under { text-decoration: underline; text-underline-offset: 3px; }
.strike { text-decoration: line-through; }
.over { text-decoration: overline; }
.ligs { font-family: "Liberation Serif", "DejaVu Sans", serif; font-weight: 400; font-size: 17px; color: #6d6d6d; }
.ligs sup { font-size: 10px; }
.langrow { height: 22px; gap: 0; }
.dis { background: #bababa; border-color: #a8a8a8; color: #777; }
.dis path { stroke: #999; }
.lang { width: 120px; }
.sharp { width: 67px; }
.aa { width: 25px; padding-left: 5px; color: #222; font-size: 13px; }
.aa sup { font-size: 11px; line-height: 0; }
.layers { display: flex; flex-direction: column; flex: 1; min-height: 0; margin: 0; }
.lrow { display: flex; align-items: center; height: 29px; padding-left: 3px; border-bottom: 1px solid #999; flex: none; }
.filt { height: 33px; padding-top: 6px; }
.nob { border: 0; height: 31px; padding-bottom: 2px; }
.kind { width: 86px; }
.kind .mag { justify-self: start; margin-left: 8px; }
.kind .mag path { stroke: #444; }
.kind select { padding-left: 22px; }
.blend { width: 117px; }
.ficons { display: flex; gap: 8px; margin-left: 15px; }
.toggle { margin-left: 13px; }
.olab { margin-left: 8px; }
.pct { width: 54px; margin-left: 5px; background: #bababa; border-color: #a8a8a8; color: #555; }
.pct input { background: #d4d4d4; margin: 1px 2px; padding-left: 1px; }
.pct button { border-color: #a8a8a8; }
.pct path { stroke: #888; }
.llab { margin-left: 3px; }
.licons { display: flex; gap: 6px; margin: 0 7px 0 8px; }
.llist { display: flex; flex: 1; min-height: 0; }
.lmain { flex: 1; background: #b0b0b0; }
.lscroll { width: 16px; background: #aaa; }
.layer { display: flex; height: 41px; border-bottom: 1px solid #a0a0a0; }
.eye { display: grid; place-items: center; width: 30px; background: #b8b8b8; border-right: 1px solid #999; }
.lsel { display: flex; align-items: center; flex: 1; background: #8a8a8a; color: #111; padding: 0 15px 0 4px; }
.lsel span { flex: 1; margin-left: 9px; }
.thumb { width: 32px; height: 32px; background: #fff; border: 1px solid #111; }
.lfoot { display: flex; align-items: center; height: 25px; padding: 0 20px 0 57px; border-top: 1px solid #999; flex: none; }
.lfoot button { flex: 1; display: grid; place-items: center; }
.fx { font: italic 15px/16px "Liberation Serif", serif; color: #666; }
.desk { display: flex; height: 8px; background: linear-gradient(90deg, #0f3440, #17323f 30%, #1d3444 60%, #17384a); flex: none; overflow: hidden; }
.orange { width: 48px; margin-left: 196px; background: #aa6f3b; }
.teal { width: 48px; margin-left: 1px; background: #4b6a72; }
.clock { margin: 2px 66px 0 auto; color: #fff; }
.dialog { position: absolute; left: 275px; top: 52px; width: 789px; border: 1px solid #4c4c4c; background: #b8b8b8; box-shadow: 3px 4px 16px rgba(0, 0, 0, .4); color: #111; }
.dtitle { display: flex; align-items: center; justify-content: space-between; height: 30px; padding: 0 10px 0 8px; background: #fff; }
.dbody { display: flex; padding: 10px; }
.dlist { width: 125px; height: 572px; margin: 0; padding: 0; list-style: none; border: 1px solid #9a9a9a; flex: none; }
.dlist button { display: block; width: 100%; height: 20px; padding: 2px 0 0 5px; text-align: left; }
.dlist .current { background: #888; height: 18px; margin-bottom: 2px; }
.dform { flex: 1; padding-left: 9px; font-size: 13px; }
.dfields { display: grid; grid-template-columns: 100px 218px; gap: 6px; align-items: center; }
.dfields label { text-align: right; color: #333; }
fieldset { width: 526px; height: 156px; margin: 6px 0 0; padding: 0; border: 1px solid #999; }
legend { margin-left: 14px; padding: 0 6px; line-height: 16px; }
.checks { display: grid; grid-template-columns: 252px 1fr; padding: 3px 0 0 7px; }
.checks > div { display: grid; grid-template-rows: repeat(5, 1fr); height: 133px; }
.checks label { display: flex; align-items: center; gap: 7px; white-space: nowrap; }
.resets { display: flex; gap: 9px; margin: 10px 0 0 95px; }
.resets button { height: 25px; width: 147px; border: 1px solid #9a9a9a; border-radius: 3px; background: #d0d0d0; }
.resets .r1 { width: 176px; }
.dactions { display: flex; flex-direction: column; gap: 8px; width: 91px; margin-right: 1px; font-size: 13px; flex: none; }
.dactions button { height: 26px; border: 1px solid #909090; border-radius: 13px; }
.dactions button:first-child { border-color: #5c5c5c; }
.redbox { position: absolute; left: 275px; top: 57px; width: 132px; height: 53px; border: 1px solid #ff3636; }
.rednote { position: absolute; left: 342px; top: 63px; color: #ff3636; font-size: 31px; line-height: 40px; }
.wm { position: absolute; left: 1048px; top: 590px; color: #fff; opacity: .72; text-shadow: 0 0 2px #777; pointer-events: none; }
.wmtop { display: flex; align-items: flex-end; height: 80px; }
.bai { width: 83px; font: 700 56px/46px "Liberation Sans", sans-serif; }
.wmtop svg { filter: drop-shadow(0 0 1px #777); }
.wmtop svg text { font: 700 35px "Liberation Sans", sans-serif; fill: #a4a4a4; text-shadow: none; }
.jy { font: 700 40px/50px "Noto Sans CJK SC", sans-serif; margin-left: 4px; }
.url { font-size: 28px; line-height: 36px; }
</style>
